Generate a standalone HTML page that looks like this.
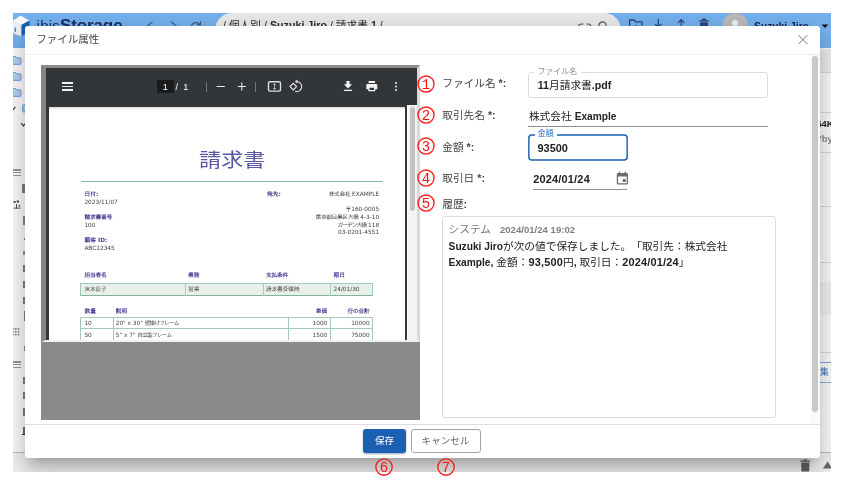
<!DOCTYPE html>
<html lang="ja">
<head>
<meta charset="utf-8">
<title>ファイル属性</title>
<style>
*{box-sizing:border-box;margin:0;padding:0}
html,body{width:846px;height:488px;overflow:hidden;background:#fff}
body{position:relative;font-family:"Liberation Sans","Noto Sans CJK JP",sans-serif;color:#444;font-size:10.4px;line-height:1;text-spacing-trim:space-all}
.abs{position:absolute}
b{font-weight:bold}
b.l{font-size:10.2px}
b.d{font-size:10.95px;letter-spacing:.18px}
/* app behind */
#app{will-change:transform;position:absolute;left:13px;top:13px;width:818px;height:459px;background:#fff;overflow:hidden}
#hdr{position:absolute;left:0;top:0;width:818px;height:35px;background:#75b3f1;overflow:hidden}
#addr{position:absolute;left:201.6px;top:0;width:406.6px;height:34px;border-radius:17px;background:#ececec}
.navy{color:#1c2f63}
/* dialog */
#clip{will-change:transform;position:absolute;left:13px;top:13px;width:818px;height:459px;overflow:hidden}
#dlg{position:absolute;left:12px;top:13px;width:795px;height:432px;background:#fff;border-radius:3px;box-shadow:0 7.4px 10px -4.7px rgba(0,0,0,.2),0 16px 25px 2px rgba(0,0,0,.14),0 6px 31px 5.4px rgba(0,0,0,.12);overflow:hidden}
.lbl{position:absolute;left:417.2px;font-size:10.7px;color:#444;white-space:nowrap;letter-spacing:0}
.num{position:absolute;color:#f00;font-family:"Noto Sans CJK JP",sans-serif;font-size:18.6px;line-height:20px;width:20px;height:20px;text-align:center;font-weight:300}
/* pdf */
#pdfwrap{position:absolute;left:16px;top:39px;width:379px;height:355px;background:#8a8a8a}
#frame{position:absolute;left:0;top:0;width:379px;height:277px;background:#33373a;border-style:solid;border-width:3px 3px 2px 5px;border-color:#8b8b8b #d9d9d9 #f1f1f1 #858585;overflow:hidden}
#tb{position:absolute;left:0;top:0;width:371px;height:38.5px;background:#323639;color:#fff}
#page{position:absolute;left:3px;top:38.5px;width:356px;height:240px;background:#fff;overflow:hidden;font-family:"DejaVu Sans","IPAGothic","Noto Sans CJK JP",sans-serif;font-size:5.8px;color:#444}
#page .p{position:absolute;color:#4e4598;white-space:nowrap;font-weight:bold;line-height:8px}
#page .v{position:absolute;color:#444;white-space:nowrap;line-height:8px}
#page .r{text-align:right}
</style>
</head>
<body>
<div id="app">
  <div id="hdr">
    <svg class="abs" style="left:0;top:0" width="20" height="30" viewBox="0 0 20 30">
      <polygon points="7.5,2.6 16.5,7.6 8.3,12 -1,8.3" fill="#fdfdfd"/>
      <polygon points="8.3,12 16.5,7.6 16.5,18.6 8.3,23.6" fill="#1b5fb4"/>
      <polygon points="-1,8.3 8.3,12 8.3,23.6 -1,19.5" fill="#f1f3f6"/>
      <rect x="1.6" y="14.2" width="1.4" height="4.6" fill="#4b86cf" transform="skewY(20) translate(0,-0.6)"/>
    </svg>
    <div class="abs navy" style="left:23.6px;top:3.2px;font-size:15px;line-height:20px;white-space:nowrap;letter-spacing:.2px">ibis<b style="font-size:17px;letter-spacing:-.1px">Storage</b></div>
    <svg class="abs" style="left:128px;top:6px" width="70" height="12" viewBox="0 0 70 12" fill="none" stroke="#44546f" stroke-width="1.1">
      <path d="M11.5,2.6 L4.5,8.5 L11.5,14"/>
      <path d="M30,2.6 L37,8.5 L30,14"/>
      <path d="M58.5,5 A5,5 0 1 0 60,9"/><path d="M59.5,2.2 v3.4 h-3.4" />
    </svg>
    <div id="addr">
      <div class="abs" style="left:8.4px;top:5px;font-size:10.7px;line-height:14px;color:#2b2b2b;white-space:nowrap">/ 個人別 / <b>Suzuki Jiro</b> / 請求書 <b>1</b> /</div>
      <svg class="abs" style="left:360px;top:7px" width="40" height="12" viewBox="0 0 40 12" fill="none" stroke="#555" stroke-width="1.2">
        <path d="M8,10 H6.5 A3,3 0 0 1 6.5,4 H8.5 M11.5,4 H13 A3,3 0 0 1 13,10 H11.5"/>
        <circle cx="27.5" cy="5.5" r="3.6"/>
      </svg>
    </div>
    <svg class="abs" style="left:612px;top:3px" width="90" height="16" viewBox="0 0 90 16">
      <g fill="none" stroke="#2c4a78" stroke-width="1.3">
        <path d="M4.6,14 V4 H9 L10.6,5.8 H17 V14"/>
        <path d="M33.3,2.8 V11 M30.2,8 L33.3,11.2 L36.4,8"/>
        <path d="M56.2,12 V4 M53.1,7 L56.2,3.6 L59.3,7"/>
      </g>
      <path d="M10.8,8.6 l1.6,2.8 h-3.2z" fill="#2c4a78"/>
      <path d="M74,4.2 h10 v1.2 h-10z M77,2.6 h4 v1.6 h-4z M75,6.2 h8 v8 h-8z" fill="#2c4a78"/>
    </svg>
    <div class="abs" style="left:708.6px;top:0.2px;width:26.4px;height:26.4px;border-radius:50%;background:#bcbcbc;overflow:hidden">
      <div class="abs" style="left:10.2px;top:6.4px;width:6px;height:6px;border-radius:50%;background:#f4f4f4"></div>
      <div class="abs" style="left:6.2px;top:13.4px;width:14px;height:12px;border-radius:7px 7px 0 0;background:#f4f4f4"></div>
    </div>
    <div class="abs navy" style="left:741px;top:6.6px;font-size:10.3px;line-height:14px;font-weight:bold;white-space:nowrap;color:#14244d">Suzuki Jiro</div>
    <svg class="abs" style="left:808px;top:11px" width="8" height="5" viewBox="0 0 8 5"><path d="M0.6,0.6 h6.8 l-3.4,3.4z" fill="#111"/></svg>
  </div>
  <svg class="abs" style="left:0.0px;top:42.6px" width="9.2" height="9.4" viewBox="0 0 9.2 9.4"><path d="M-1,1.8 V0.5 H2.6 L3.6,1.8 H6.999999999999999 a1,1 0 0 1 1,1 V7.4 a1,1 0 0 1 -1,1 H-1z" fill="#b4d3f3" stroke="#67a5e6" stroke-width="1"/></svg>
  <svg class="abs" style="left:0.0px;top:58.8px" width="9.2" height="9.4" viewBox="0 0 9.2 9.4"><path d="M-1,1.8 V0.5 H2.6 L3.6,1.8 H6.999999999999999 a1,1 0 0 1 1,1 V7.4 a1,1 0 0 1 -1,1 H-1z" fill="#b4d3f3" stroke="#67a5e6" stroke-width="1"/></svg>
  <svg class="abs" style="left:0.0px;top:75.0px" width="9.2" height="9.4" viewBox="0 0 9.2 9.4"><path d="M-1,1.8 V0.5 H2.6 L3.6,1.8 H6.999999999999999 a1,1 0 0 1 1,1 V7.4 a1,1 0 0 1 -1,1 H-1z" fill="#b4d3f3" stroke="#67a5e6" stroke-width="1"/></svg>
  <svg class="abs" style="left:9.4px;top:91.2px" width="6" height="9" viewBox="0 0 6 9"><path d="M6,0.6 H1.6 a1,1 0 0 0 -1,1 V7 a1,1 0 0 0 1,1 H6z" fill="#b4d3f3" stroke="#67a5e6" stroke-width="1"/></svg>
  <svg class="abs" style="left:0;top:92px" width="12" height="24" viewBox="0 0 12 24" fill="none" stroke="#222" stroke-width="1.1"><path d="M-1,4.2 L0.4,4.6 L2.4,1.8"/><path d="M8,18 L10.4,20.8 L12.6,18.4"/></svg>
  <div class="abs" style="left:0.2px;top:156.3px;width:7.7px;height:1.6px;background:#9c9c9c;"></div>
  <div class="abs" style="left:0.2px;top:158.9px;width:7.7px;height:1.6px;background:#9c9c9c;"></div>
  <div class="abs" style="left:0.2px;top:161.5px;width:7.7px;height:1.6px;background:#9c9c9c;"></div>
  <div class="abs" style="left:0.2px;top:348.3px;width:7.7px;height:1.6px;background:#9c9c9c;"></div>
  <div class="abs" style="left:0.2px;top:350.9px;width:7.7px;height:1.6px;background:#9c9c9c;"></div>
  <div class="abs" style="left:0.2px;top:353.5px;width:7.7px;height:1.6px;background:#9c9c9c;"></div>
  <div class="abs" style="left:9.4px;top:171.0px;width:2.6px;height:9.2px;background:#555;opacity:.75;"></div>
  <div class="abs" style="left:10.4px;top:202.5px;width:1.6px;height:9.3px;background:#666;opacity:.75;"></div>
  <div class="abs" style="left:11.0px;top:225.0px;width:1px;height:1.8px;background:#555;opacity:.75;"></div>
  <div class="abs" style="left:9.6px;top:238.2px;width:2.4px;height:4.3px;background:#777;opacity:.75;"></div>
  <div class="abs" style="left:10.0px;top:251.9px;width:2px;height:6.8px;background:#555;opacity:.75;"></div>
  <div class="abs" style="left:10.4px;top:267.9px;width:1.6px;height:6.8px;background:#555;opacity:.75;"></div>
  <div class="abs" style="left:10.0px;top:283.9px;width:2px;height:7.4px;background:#555;opacity:.75;"></div>
  <div class="abs" style="left:10.8px;top:298.2px;width:1.2px;height:9.8px;background:#555;opacity:.75;"></div>
  <div class="abs" style="left:11.0px;top:333.3px;width:1px;height:4.3px;background:#666;opacity:.75;"></div>
  <div class="abs" style="left:10.4px;top:364.0px;width:1.6px;height:7.4px;background:#555;opacity:.75;"></div>
  <div class="abs" style="left:10.0px;top:378.8px;width:2px;height:6.8px;background:#555;opacity:.75;"></div>
  <div class="abs" style="left:10.4px;top:395.4px;width:1.6px;height:7.3px;background:#555;opacity:.75;"></div>
  <div class="abs" style="left:10.0px;top:413.8px;width:2px;height:6.8px;background:#444;opacity:.75;"></div>
  <div class="abs" style="left:8.6px;top:421.0px;width:3.4px;height:0.9px;background:#333;"></div>
  <svg class="abs" style="left:0;top:187.2px" width="10" height="10" viewBox="0 0 10 10" fill="#555"><rect x="0.6" y="1" width="2" height="2"/><rect x="3.8" y="0.4" width="2.2" height="2.2"/><rect x="3" y="4" width="1" height="4.6"/><rect x="0.8" y="7.6" width="6.8" height="1"/><rect x="5.6" y="5" width="1.6" height="1.6"/></svg>
  <svg class="abs" style="left:-0.6px;top:315.4px" width="8" height="8" viewBox="0 0 8 8" fill="#8c8c8c"><rect x="0" y="0" width="1.7" height="1.7"/><rect x="2.8" y="0" width="1.7" height="1.7"/><rect x="5.6" y="0" width="1.7" height="1.7"/><rect x="0" y="2.8" width="1.7" height="1.7"/><rect x="2.8" y="2.8" width="1.7" height="1.7"/><rect x="5.6" y="2.8" width="1.7" height="1.7"/><rect x="0" y="5.6" width="1.7" height="1.7"/><rect x="2.8" y="5.6" width="1.7" height="1.7"/><rect x="5.6" y="5.6" width="1.7" height="1.7"/></svg>
  <div class="abs" style="left:0.0px;top:439.0px;width:818px;height:20px;background:#f4f4f4;border-top:1px solid #bdbdbd;"></div>
  <div class="abs" style="left:807.0px;top:35.5px;width:11px;height:24px;background:#f0f0f0;"></div>
  <div class="abs" style="left:807.0px;top:59.0px;width:11px;height:0.8px;background:#dadada;"></div>
  <div class="abs" style="left:807.0px;top:99.4px;width:11px;height:0.8px;background:#dadada;"></div>
  <div class="abs" style="left:807.0px;top:138.5px;width:11px;height:0.8px;background:#dadada;"></div>
  <div class="abs" style="left:807.0px;top:192.8px;width:11px;height:0.8px;background:#dadada;"></div>
  <div class="abs" style="left:807.0px;top:248.9px;width:11px;height:0.8px;background:#dadada;"></div>
  <div class="abs" style="left:807.0px;top:339.0px;width:11px;height:0.8px;background:#dadada;"></div>
  <div class="abs" style="left:807.0px;top:269.0px;width:11px;height:33px;background:#f5f5f5;"></div>
  <div class="abs" style="left:806.2px;top:104.5px;font-size:9.4px;line-height:12px;font-weight:bold;color:#222;white-space:nowrap;margin-left:-2.8px">64K</div>
  <div class="abs" style="left:806.6px;top:120px;font-size:9.4px;line-height:12px;font-weight:bold;color:#8a8a8a;white-space:nowrap">'by</div>
  <div class="abs" style="left:807px;top:348.6px;width:11px;height:21px;border-top:1px solid #7fb0e8;border-bottom:1px solid #7fb0e8;font-size:8.6px;line-height:19px;color:#3b78c4;white-space:nowrap;overflow:hidden">集</div>
  <svg class="abs" style="left:786px;top:446px" width="13" height="14" viewBox="0 0 13 14"><path d="M1.4,1.6 h9.8 v1.2 h-9.8z M4.4,0.6 h3.8 v1.2 h-3.8z M2.3,3.4 h8 v8.2 a1,1 0 0 1 -1,1 h-6 a1,1 0 0 1 -1,-1z" fill="#636363"/></svg>
  <svg class="abs" style="left:809px;top:447px" width="10" height="10" viewBox="0 0 10 10"><path d="M1,8.6 L5.6,1.4 L10.2,8.6z" fill="#6a6a6a"/></svg>
</div>
<div id="clip">
<div id="dlg">
  <div class="abs" style="left:11.2px;top:6.1px;font-size:10.5px;line-height:14px;color:#444">ファイル属性</div>
  <svg class="abs" style="left:772px;top:8px" width="12" height="12" viewBox="0 0 12 12"><path d="M1.5,1.2 L10.3,10 M10.3,1.2 L1.5,10" stroke="#7a7a7a" stroke-width="1" fill="none"/></svg>
  <div class="abs" style="left:0;top:28px;width:795px;height:1px;background:#eee"></div>
  <div class="abs" style="left:0;top:397.5px;width:795px;height:1px;background:#ddd"></div>

  <svg class="abs" style="z-index:5;left:391.1px;top:47.8px" width="20" height="20" viewBox="0 0 20 20"><circle cx="10" cy="10" r="8.05" fill="none" stroke="#ff1a1a" stroke-width="1.35"/><text x="10" y="14.7" text-anchor="middle" font-family="Liberation Mono, monospace" font-size="14" fill="#ff1010">1</text></svg>
  <svg class="abs" style="z-index:5;left:391.1px;top:79.1px" width="20" height="20" viewBox="0 0 20 20"><circle cx="10" cy="10" r="8.05" fill="none" stroke="#ff1a1a" stroke-width="1.35"/><text x="10" y="14.7" text-anchor="middle" font-family="Liberation Mono, monospace" font-size="14" fill="#ff1010">2</text></svg>
  <svg class="abs" style="z-index:5;left:391.1px;top:110.3px" width="20" height="20" viewBox="0 0 20 20"><circle cx="10" cy="10" r="8.05" fill="none" stroke="#ff1a1a" stroke-width="1.35"/><text x="10" y="14.7" text-anchor="middle" font-family="Liberation Mono, monospace" font-size="14" fill="#ff1010">3</text></svg>
  <svg class="abs" style="z-index:5;left:391.1px;top:141.8px" width="20" height="20" viewBox="0 0 20 20"><circle cx="10" cy="10" r="8.05" fill="none" stroke="#ff1a1a" stroke-width="1.35"/><text x="10" y="14.7" text-anchor="middle" font-family="Liberation Mono, monospace" font-size="14" fill="#ff1010">4</text></svg>
  <svg class="abs" style="z-index:5;left:391.1px;top:167.1px" width="20" height="20" viewBox="0 0 20 20"><circle cx="10" cy="10" r="8.05" fill="none" stroke="#ff1a1a" stroke-width="1.35"/><text x="10" y="14.7" text-anchor="middle" font-family="Liberation Mono, monospace" font-size="14" fill="#ff1010">5</text></svg>

  <div class="lbl" style="top:50.2px;line-height:14px">ファイル名 <b>*:</b></div>
  <div class="lbl" style="top:81.5px;line-height:14px">取引先名 <b>*:</b></div>
  <div class="lbl" style="top:114.1px;line-height:14px">金額 <b>*:</b></div>
  <div class="lbl" style="top:145.3px;line-height:14px">取引日 <b>*:</b></div>
  <div class="lbl" style="top:171.3px;line-height:14px">履歴<b>:</b></div>

  <div class="abs" style="left:503.2px;top:46.2px;width:239.8px;height:25.8px;border:1px solid #dcdcdc;border-radius:3px"></div>
  <div class="abs" style="left:509.2px;top:40.6px;height:10px;padding:0 3.2px;background:#fff;font-size:8px;line-height:10px;color:#8a8a8a;white-space:nowrap">ファイル名</div>
  <div class="abs" style="left:512.7px;top:51.9px;font-size:10.7px;line-height:14px;color:#222;white-space:nowrap"><b>11</b>月請求書<b>.pdf</b></div>

  <div class="abs" style="left:503.9px;top:82.9px;font-size:10.7px;line-height:14px;color:#222;white-space:nowrap">株式会社 <b class="l">Example</b></div>
  <div class="abs" style="left:503.3px;top:100.1px;width:239.7px;height:.8px;background:#8f8f8f"></div>

  <svg class="abs" style="left:500px;top:105px" width="106" height="32" viewBox="0 0 106 32"><rect x="3.85" y="3.9" width="98.3" height="25" rx="3" fill="none" stroke="#1b60b3" stroke-width="1.45"/></svg>
  <div class="abs" style="left:509.9px;top:102.7px;height:10px;padding:0 2.9px;background:#fff;font-size:8px;line-height:10px;color:#2f71c2;white-space:nowrap">金額</div>
  <div class="abs" style="left:512.5px;top:115px;font-size:10.95px;line-height:14px;color:#222;font-weight:bold;white-space:nowrap">93500</div>

  <div class="abs" style="left:508.2px;top:145.6px;font-size:10.95px;letter-spacing:.2px;line-height:14px;color:#222;font-weight:bold;white-space:nowrap">2024/01/24</div>
  <svg class="abs" style="left:590.6px;top:144.8px" width="13" height="15" viewBox="0 0 13 15">
    <path d="M2.1,2 h8.6 a1.3,1.3 0 0 1 1.3,1.3 v8.9 a1.3,1.3 0 0 1 -1.3,1.3 h-8.6 a1.3,1.3 0 0 1 -1.3,-1.3 v-8.9 a1.3,1.3 0 0 1 1.3,-1.3z M2.1,5.4 v6.8 h8.6 v-6.8z" fill="#6b6b6b" fill-rule="evenodd"/>
    <rect x="2.8" y="0.7" width="1.4" height="2" fill="#6b6b6b"/><rect x="8.6" y="0.7" width="1.4" height="2" fill="#6b6b6b"/>
    <rect x="6.7" y="8" width="3" height="3" fill="#6b6b6b"/>
  </svg>
  <div class="abs" style="left:508.2px;top:163.1px;width:93.6px;height:.8px;background:#8f8f8f"></div>

  <div class="abs" style="left:417px;top:190px;width:334px;height:202px;border:1px solid #dcdcdc;border-radius:3px"></div>
  <div class="abs" style="left:423.6px;top:195.9px;font-size:10.7px;line-height:14px;color:#7a7a7a;white-space:nowrap">システム<b style="font-size:9.6px;margin-left:8.9px;color:#808080">2024/01/24 19:02</b></div>
  <div class="abs" style="left:423.6px;top:212.9px;font-size:10.7px;line-height:14px;color:#222;white-space:nowrap"><b class="l">Suzuki Jiro</b>が次の値で保存しました。「取引先：株式会社</div>
  <div class="abs" style="left:423.6px;top:228.9px;font-size:10.7px;line-height:14px;color:#222;white-space:nowrap"><b class="l">Example,</b> 金額：<b class="d">93,500</b>円<b class="l">,</b> 取引日：<b class="d">2024/01/24</b>」</div>

  <div class="abs" style="left:784.5px;top:29px;width:10.5px;height:368.5px;background:#fafafa"></div>
  <div class="abs" style="left:787.1px;top:30.3px;width:5.7px;height:355.7px;border-radius:2.9px;background:#c8c8c8"></div>

  <div class="abs" style="left:338.3px;top:403.2px;width:42.6px;height:23.4px;border-radius:3px;background:#1b60b3;color:#fff;font-size:9.6px;line-height:23.4px;text-align:center;box-shadow:0 1px 2px rgba(0,0,0,.35)">保存</div>
  <div class="abs" style="left:386.2px;top:403.2px;width:69.7px;height:23.4px;border-radius:3px;border:1px solid #a4a4a4;color:#666;font-size:9.6px;line-height:21.8px;text-align:center;text-indent:-1px;background:#fff">キャンセル</div>

  <div id="pdfwrap">
    <div id="frame">
      <div id="tb">
        <div class="abs" style="left:16px;top:14.1px;width:11.4px;height:1.7px;background:#f1f1f1"></div>
        <div class="abs" style="left:16px;top:17.5px;width:11.4px;height:1.7px;background:#f1f1f1"></div>
        <div class="abs" style="left:16px;top:20.9px;width:11.4px;height:1.7px;background:#f1f1f1"></div>
        <div class="abs" style="left:111px;top:11.9px;width:16.8px;height:12.8px;background:#191b1c;color:#fff;font-size:9.1px;line-height:14.2px;text-align:center">1</div>
        <div class="abs" style="left:129.5px;top:12.6px;font-size:9.1px;line-height:12.8px;color:#fff;white-space:nowrap;word-spacing:2.6px">/ 1</div>
        <div class="abs" style="left:160px;top:14.3px;width:.8px;height:9.4px;background:#75787a"></div>
        <div class="abs" style="left:209.2px;top:14.3px;width:.8px;height:9.4px;background:#75787a"></div>
        <svg class="abs" style="left:166px;top:10px" width="200" height="18" viewBox="0 0 200 18">
          <g stroke="#eee" stroke-width="1.1" fill="none">
            <path d="M4.6,8.5 h8.2"/>
            <path d="M25.7,8.5 h8.2 M29.8,4.4 v8.2"/>
            <rect x="56.5" y="3.7" width="12" height="9.4" rx="1.4" stroke="#ddd" stroke-width="1.4"/>
            <path d="M62.5,7.6 v2" stroke="#ddd" stroke-width="1"/>
            <path d="M84.4,3.6 A5,5 0 1 1 83,13.3" stroke="#ddd" stroke-width="1.1"/>
            <path d="M81.3,5.3 l3.3,3.3 -3.3,3.3 -3.3,-3.3z" stroke="#eee" stroke-width="1.1"/>
          </g>
          <path d="M62.5,5.2 l1.5,1.9 h-3z M62.5,11.8 l1.5,-1.9 h-3z" fill="#ddd"/>
          <path d="M85.4,1.6 v4 l-2.8,-2z" fill="#ddd"/>
          <path d="M134.4,3.1 h3.2 v3.2 h2.5 l-4.1,4.1 -4.1,-4.1 h2.5z M131.9,11.8 h8.2 v1.25 h-8.2z" fill="#f1f1f1"/>
          <path d="M156.6,3.1 h6.4 v2 h-6.4z M155.3,5.9 h9 a1,1 0 0 1 1,1 v4.4 h-2 v2 h-7 v-2 h-2 v-4.4 a1,1 0 0 1 1,-1z M157.6,9.7 h4.4 v2.4 h-4.4z" fill="#f1f1f1" fill-rule="evenodd"/>
          <circle cx="184" cy="4.9" r="1" fill="#f1f1f1"/><circle cx="184" cy="8.4" r="1" fill="#f1f1f1"/><circle cx="184" cy="12" r="1" fill="#f1f1f1"/>
        </svg>
      </div>
      <div id="page">
        <div class="abs" style="left:0;top:0;width:356px;height:3px;background:linear-gradient(#d9d9d9,#fff)"></div>
        <div class="abs" style="left:150px;top:41.4px;font-family:'Liberation Sans','Noto Sans CJK JP',sans-serif;font-weight:400;font-size:19.8px;line-height:25px;color:#5a58a4;white-space:nowrap;transform:scaleX(1.12);transform-origin:0 0">請求書</div>
        <div class="abs" style="left:31.9px;top:74.5px;width:302px;height:.9px;background:#86bb9f"></div>
        <div class="p" style="left:35.4px;top:83.9px">日付:</div>
        <div class="v" style="left:35.4px;top:91.6px">2023/11/07</div>
        <div class="p" style="left:35.4px;top:106.5px"><span style="letter-spacing:-.25px">請求書番号</span></div>
        <div class="v" style="left:35.4px;top:114.2px">100</div>
        <div class="p" style="left:35.4px;top:129.3px">顧客 ID:</div>
        <div class="v" style="left:35.4px;top:137.3px">ABC12345</div>
        <div class="p" style="left:217.9px;top:83.9px">宛先:</div>
        <div class="v r" style="right:25.9px;top:83.9px"><span style="letter-spacing:-.45px">株式会社</span> EXAMPLE</div>
        <div class="v r" style="right:25.9px;top:98.9px">〒160-0005</div>
        <div class="v r" style="right:25.9px;top:106.5px"><span style="letter-spacing:-.45px">東京都目黒区大橋</span> 4-3-10</div>
        <div class="v r" style="right:25.9px;top:114.0px"><span style="letter-spacing:-1px">ガーデン大橋</span> 118</div>
        <div class="v r" style="right:25.9px;top:121.5px">03-0201-4551</div>
        <div class="p" style="left:35.4px;top:164.6px"><span style="letter-spacing:-.25px">担当者名</span></div>
        <div class="p" style="left:138.9px;top:164.6px">業務</div>
        <div class="p" style="left:216.9px;top:164.6px"><span style="letter-spacing:-.25px">支払条件</span></div>
        <div class="p" style="left:284.5px;top:164.6px">期日</div>
        <div class="abs" style="left:31.1px;top:176.1px;width:292.8px;height:13.9px;background:#e9f0ec;border:.7px solid #a2ccb7;border-bottom:1.5px solid #7fb698"></div>
        <div class="abs" style="left:135.6px;top:176.1px;width:.7px;height:13px;background:#a2ccb7"></div>
        <div class="abs" style="left:213.6px;top:176.1px;width:.7px;height:13px;background:#a2ccb7"></div>
        <div class="abs" style="left:281.3px;top:176.1px;width:.7px;height:13px;background:#a2ccb7"></div>
        <div class="v" style="left:35.4px;top:178.5px"><span style="letter-spacing:-.25px">宮本辰子</span></div>
        <div class="v" style="left:138.9px;top:178.5px">営業</div>
        <div class="v" style="left:216.9px;top:178.5px"><span style="letter-spacing:-.25px">請求書受領時</span></div>
        <div class="v" style="left:284.5px;top:178.5px">24/01/30</div>
        <div class="p" style="left:35.4px;top:200.2px">数量</div>
        <div class="p" style="left:66.7px;top:200.2px">説明</div>
        <div class="p r" style="right:77.7px;top:200.2px">単価</div>
        <div class="p r" style="right:35.4px;top:200.2px"><span style="letter-spacing:-.25px">行の合計</span></div>
        <div class="abs" style="left:31.1px;top:210.4px;width:292.8px;height:30px;border:.7px solid #a2ccb7"></div>
        <div class="abs" style="left:31.1px;top:221.7px;width:292.8px;height:.7px;background:#a2ccb7"></div>
        <div class="abs" style="left:63.7px;top:210.4px;width:.7px;height:30px;background:#a2ccb7"></div>
        <div class="abs" style="left:239.4px;top:210.4px;width:.7px;height:30px;background:#a2ccb7"></div>
        <div class="abs" style="left:281.3px;top:210.4px;width:.7px;height:30px;background:#a2ccb7"></div>
        <div class="v" style="left:35.4px;top:212.4px">10</div>
        <div class="v" style="left:66.7px;top:212.4px">20" x 30" <span style="letter-spacing:-.95px">壁掛けフレーム</span></div>
        <div class="v r" style="right:77.7px;top:212.4px">1000</div>
        <div class="v r" style="right:35.4px;top:212.4px">10000</div>
        <div class="v" style="left:35.4px;top:224.9px">50</div>
        <div class="v" style="left:66.7px;top:224.9px">5" x 7" <span style="letter-spacing:-.95px">自立型フレーム</span></div>
        <div class="v r" style="right:77.7px;top:224.9px">1500</div>
        <div class="v r" style="right:35.4px;top:224.9px">75000</div>
      </div>
      <div class="abs" style="left:361px;top:36.5px;width:10px;height:240px;background:#f4f4f4;border-left:1px solid #fbfbfb"></div>
      <div class="abs" style="left:364.4px;top:38.9px;width:4.8px;height:104.6px;border-radius:2.4px;background:#c2c2c2"></div>
    </div>
  </div>
</div>
</div>
<div id="ann" style="position:absolute;left:0;top:0;width:846px;height:488px;will-change:transform;pointer-events:none">
<svg class="abs" style="left:374.1px;top:456.7px" width="20" height="20" viewBox="0 0 20 20"><circle cx="10" cy="10" r="8.2" fill="none" stroke="#ff1a1a" stroke-width="1.35"/><text x="10" y="14.7" text-anchor="middle" font-family="Liberation Mono, monospace" font-size="14" fill="#ff1010">6</text></svg>
<svg class="abs" style="left:436.1px;top:456.7px" width="20" height="20" viewBox="0 0 20 20"><circle cx="10" cy="10" r="8.2" fill="none" stroke="#ff1a1a" stroke-width="1.35"/><text x="10" y="14.7" text-anchor="middle" font-family="Liberation Mono, monospace" font-size="14" fill="#ff1010">7</text></svg>
</div>
</body>
</html>
